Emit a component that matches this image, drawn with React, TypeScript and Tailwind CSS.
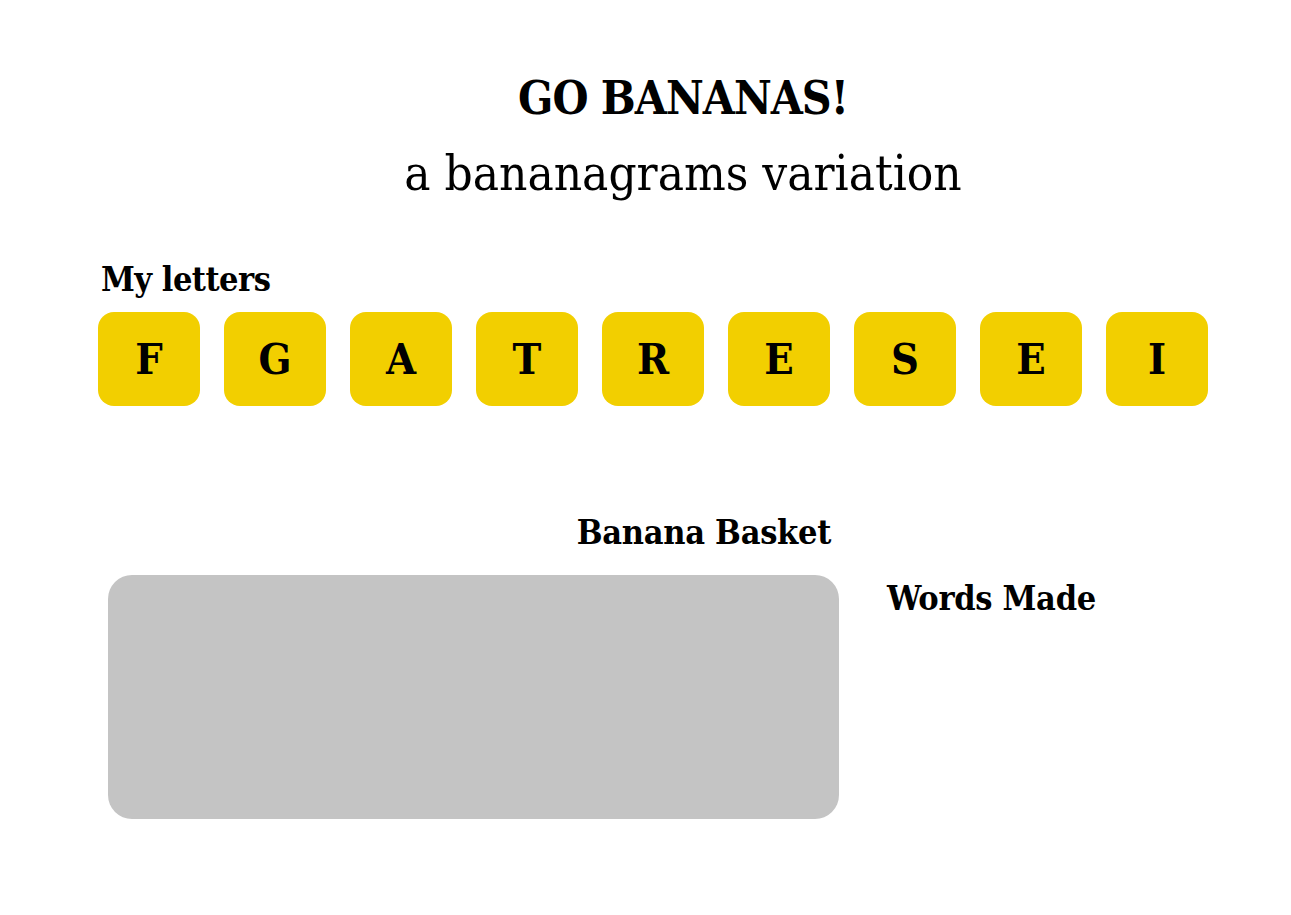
const letters = ["F", "G", "A", "T", "R", "E", "S", "E", "I"];

const serif = "font-['DejaVu_Serif_Condensed','Liberation_Serif',serif]";

export default function App() {
  return (
    <main className={`min-h-screen bg-white text-black ${serif}`}>
      {/* ---------- Header ---------- */}
      <header className="pl-[75px] pt-[68px] text-center">
        <h1 className="text-[46px] font-bold leading-[60px] tracking-[-1px]">GO BANANAS!</h1>
        <p className="mt-[16px] text-[49px] leading-[60px]">a bananagrams variation</p>
      </header>

      {/* ---------- My letters ---------- */}
      <section className="mt-[55px] pl-[98px]">
        <h2 className="pl-[3px] text-[34px] font-bold leading-[40px] tracking-[-0.5px]">My letters</h2>
        <div className="mt-[13px] flex gap-6">
          {letters.map((l, i) => (
            <div
              key={i}
              className="flex h-[94px] w-[102px] shrink-0 items-center justify-center rounded-2xl bg-[#f2cf00] text-[43px] font-bold"
            >
              {l}
            </div>
          ))}
        </div>
      </section>

      {/* ---------- Basket + words ---------- */}
      <section className="mt-[106px] flex pl-[108px]">
        <div className="w-[731px]">
          <h2 className="pr-2 text-right text-[34px] font-bold leading-[40px] tracking-[-0.3px]">Banana Basket</h2>
          <div className="mt-[23px] h-[244px] rounded-3xl bg-[#c4c4c4]" />
        </div>
        <div className="ml-12 pt-[66px]">
          <h2 className="text-[34px] font-bold leading-[40px] tracking-[-0.3px]">Words Made</h2>
        </div>
      </section>
    </main>
  );
}
